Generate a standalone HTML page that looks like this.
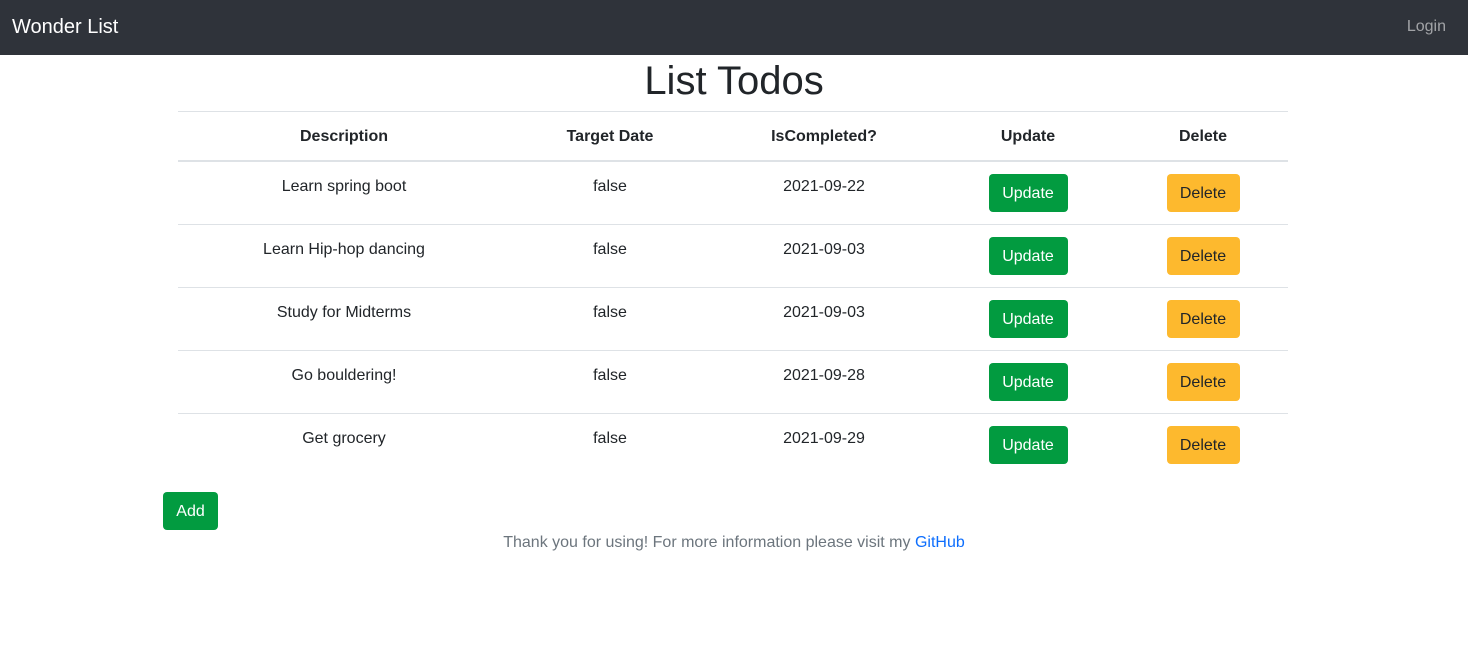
<!DOCTYPE html>
<html><head><style>
body{margin:0;font-family:"Liberation Sans",Helvetica,Arial,sans-serif;color:#212529;background:#fff;width:1468px;height:648px;overflow:hidden}
.nav{height:55px;background:#2f333a;position:relative}
.brand{position:absolute;left:12px;top:16px;color:#fff;font-size:20px}
.login{position:absolute;right:22px;top:18px;color:rgba(255,255,255,.55);font-size:16px}
h1{margin:0;position:absolute;top:58px;left:0;width:1468px;text-align:center;font-size:40px;font-weight:500;line-height:46px}
table{position:absolute;left:178px;top:111px;border-collapse:collapse;width:1110px;font-size:16px;table-layout:fixed}
th{height:49px;border-top:1px solid #dee2e6;border-bottom:2px solid #dee2e6;font-weight:bold;text-align:center;vertical-align:middle;padding:3px 0 0;box-sizing:border-box}
td{height:63px;border-bottom:1px solid #dee2e6;text-align:center;vertical-align:top;padding:16px 0 0;box-sizing:border-box}
tr.f td{height:64px}
tr:last-child td{border-bottom:none}
.btn{display:inline-block;height:38px;line-height:40px;border-radius:4px;font-size:16px;margin-top:-4px;padding:0 12px;vertical-align:top}
.u{background:#029b40;color:#fff;width:55px}
.d{background:#fdb92e;color:#212529;width:49px}
.add{position:absolute;left:163px;top:492px;height:38px;line-height:40px;width:55px;text-align:center;background:#029b40;color:#fff;border-radius:4px}
.foot{position:absolute;top:534px;width:1468px;text-align:center;color:#6c757d;font-size:16px}
.foot span{color:#0d6efd}
</style></head><body>
<div class="nav"><div class="brand">Wonder List</div><div class="login">Login</div></div>
<h1>List Todos</h1>
<table>
<colgroup><col style="width:332px"><col style="width:200px"><col style="width:228px"><col style="width:180px"><col style="width:170px"></colgroup>
<tr><th>Description</th><th>Target Date</th><th>IsCompleted?</th><th>Update</th><th>Delete</th></tr>
<tr class="f"><td>Learn spring boot</td><td>false</td><td>2021-09-22</td><td><span class="btn u">Update</span></td><td><span class="btn d">Delete</span></td></tr>
<tr><td>Learn Hip-hop dancing</td><td>false</td><td>2021-09-03</td><td><span class="btn u">Update</span></td><td><span class="btn d">Delete</span></td></tr>
<tr><td>Study for Midterms</td><td>false</td><td>2021-09-03</td><td><span class="btn u">Update</span></td><td><span class="btn d">Delete</span></td></tr>
<tr><td>Go bouldering!</td><td>false</td><td>2021-09-28</td><td><span class="btn u">Update</span></td><td><span class="btn d">Delete</span></td></tr>
<tr><td>Get grocery</td><td>false</td><td>2021-09-29</td><td><span class="btn u">Update</span></td><td><span class="btn d">Delete</span></td></tr>
</table>
<div class="add">Add</div>
<div class="foot">Thank you for using! For more information please visit my <span>GitHub</span></div>
</body></html>
